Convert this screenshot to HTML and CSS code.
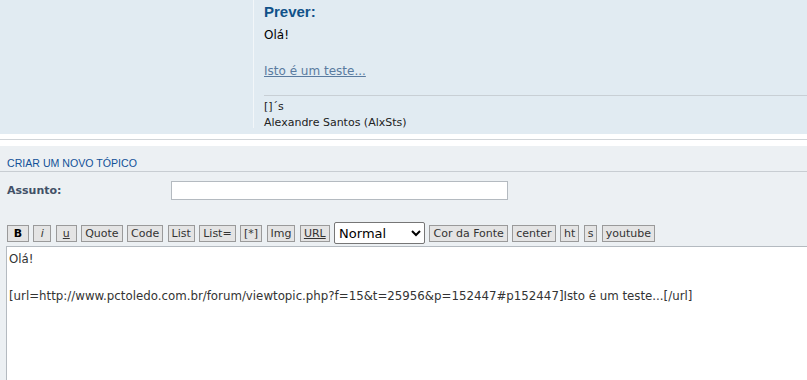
FILE: index.html
```html
<!DOCTYPE html>
<html lang="pt-BR">

<head>
    <meta charset="UTF-8">
    <meta name="viewport" content="width=device-width, initial-scale=1.0">
    <title>Criar um novo tópico</title>
    <link rel="stylesheet" href="styles.css">
</head>

<body>
    <div class="preview">
        <div class="preview-side"></div>
        <div class="preview-body">
            <h3>Prever:</h3>
            <div class="content">
                <p>Olá!</p>
                <p class="link-line"><a href="#">Isto é um teste...</a></p>
            </div>
            <div class="signature">
                []´s<br>
                Alexandre Santos (AlxSts)
            </div>
        </div>
    </div>

    <div class="divider"></div>

    <div class="panel">
        <h3 class="panel-title">Criar um novo tópico</h3>

        <div class="field">
            <label for="assunto">Assunto:</label>
            <input type="text" id="assunto">
        </div>

        <div class="toolbar">
            <button class="bold">B</button>
            <button class="italic">i</button>
            <button class="under small">u</button>
            <button>Quote</button>
            <button>Code</button>
            <button>List</button>
            <button>List=</button>
            <button>[*]</button>
            <button>Img</button>
            <button class="under">URL</button>
            <select>
                <option>Normal</option>
                <option>Pequena</option>
                <option>Grande</option>
            </select>
            <button>Cor da Fonte</button>
            <button>center</button>
            <button>ht</button>
            <button>s</button>
            <button>youtube</button>
        </div>

        <textarea id="mensagem">Olá!

[url=http://www.pctoledo.com.br/forum/viewtopic.php?f=15&amp;t=25956&amp;p=152447#p152447]Isto é um teste...[/url]</textarea>
    </div>
</body>

</html>
```

FILE: styles.css
```css
* {
    box-sizing: border-box;
}

body {
    margin: 0;
    font-family: "DejaVu Sans", Verdana, sans-serif;
    font-size: 11px;
    color: #333;
    background-color: #fff;
    overflow: hidden;
}

.preview {
    display: flex;
    height: 134px;
    background-color: #e1ebf2;
}

.preview-side {
    width: 254px;
    height: 128px;
    border-right: 1px solid #f2f6f9;
}

.preview-body {
    flex: 1;
    padding-left: 10px;
}

.preview-body h3 {
    margin: 2px 0 0;
    font-family: "Liberation Sans", Arial, sans-serif;
    font-size: 15px;
    line-height: 20px;
    color: #105289;
}

.content {
    color: #000;
    font-size: 12px;
    line-height: 18px;
}

.content p {
    margin: 4px 0 0;
}

.content .link-line {
    margin-top: 18px;
}

.content a {
    color: #5a7ba0;
}

.signature {
    margin-top: 15px;
    padding-top: 3px;
    border-top: 1px solid #c8cfd5;
    color: #222;
    line-height: 16px;
}

.divider {
    height: 1px;
    margin: 5px 0 6px;
    background-color: #d0d4d8;
}

.panel {
    background-color: #ecf0f3;
    padding: 11px 0 0 7px;
    height: 234px;
    overflow: hidden;
}

.panel-title {
    margin: 0 0 0 -7px;
    padding: 0 0 2px 7px;
    font-family: "Liberation Sans", Arial, sans-serif;
    font-size: 10.6px;
    line-height: 12px;
    font-weight: normal;
    text-transform: uppercase;
    color: #115098;
    border-bottom: 1px solid #c8cdd2;
}

.field {
    display: flex;
    align-items: center;
    margin-top: 9px;
}

.field label {
    width: 164px;
    font-weight: bold;
    color: #425067;
}

.field input {
    width: 337px;
    height: 19px;
    border: 1px solid #b4bac0;
    background-color: #fff;
}

.toolbar {
    display: flex;
    align-items: center;
    gap: 4.4px;
    margin-top: 22px;
}

.toolbar button {
    height: 17px;
    padding: 0 3px;
    border: 1px solid #9a9a9a;
    background-color: #e4e4e4;
    font-family: "DejaVu Sans", Verdana, sans-serif;
    font-size: 11px;
    line-height: 15px;
    color: #333;
}

.toolbar .bold {
    width: 22px;
    font-weight: bold;
    color: #000;
}

.toolbar .italic {
    width: 18px;
    font-style: italic;
}

.toolbar .under {
    text-decoration: underline;
}

.toolbar .small {
    width: 21px;
}

.toolbar select {
    width: 91px;
    height: 22px;
    border: 1px solid #767676;
    border-radius: 2px;
    background-color: #fff;
    font-family: "DejaVu Sans", Verdana, sans-serif;
    font-size: 13px;
    color: #000;
}

.panel textarea {
    display: block;
    width: 830px;
    height: 160px;
    margin: 2px 0 0 -1px;
    padding: 3px 2px;
    border: 1px solid #b4bac0;
    background-color: #fff;
    font-family: "DejaVu Sans", Verdana, sans-serif;
    font-size: 11.8px;
    line-height: 18.5px;
    color: #333;
    resize: none;
}
```
